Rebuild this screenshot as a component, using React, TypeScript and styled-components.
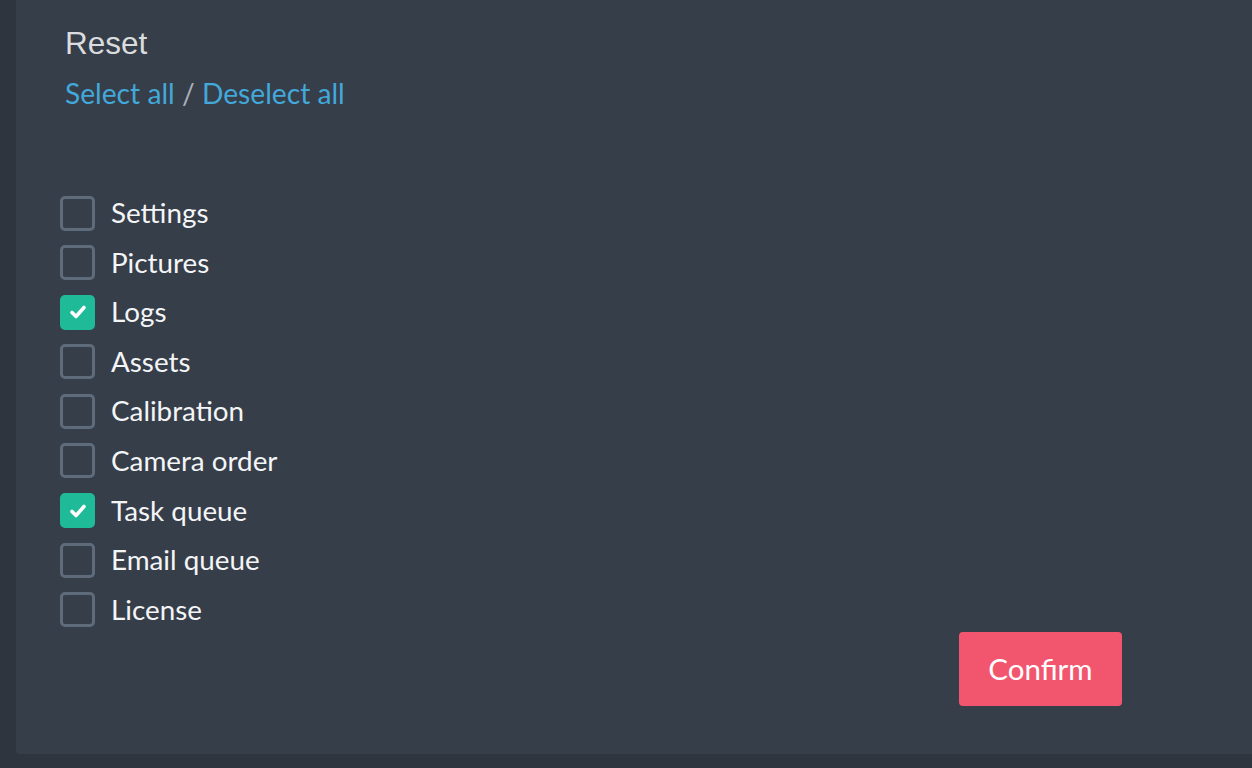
import React, { useState } from 'react'
import styled, { createGlobalStyle } from 'styled-components'

const GlobalStyle = createGlobalStyle`
  html, body {
    margin: 0;
    padding: 0;
    background: #2f353e;
    overflow: hidden;
  }
  #root {
    height: 768px;
  }
`

const Page = styled.div`
  height: 768px;
  padding-left: 16px;
  box-sizing: border-box;
`

const Panel = styled.div`
  height: 754px;
  background: #363e49;
  border-bottom-left-radius: 4px;
  box-sizing: border-box;
  padding: 25px 0 0 49px;
  display: flex;
  flex-direction: column;
`

const Title = styled.div`
  font-family: 'Liberation Sans', Arial, sans-serif;
  font-size: 31.5px;
  line-height: 36px;
  height: 36px;
  color: #dadcdf;
`

const LinkRow = styled.div`
  margin-top: 14px;
  font-family: Lato, 'Open Sans', sans-serif;
  font-size: 28.2px;
  line-height: 36px;
  height: 36px;
  color: #a9b0b8;
`

const TextLink = styled.a`
  color: #43a8da;
  cursor: pointer;
  text-decoration: none;
`

const List = styled.div`
  margin-top: 85px;
  margin-left: -5px;
  display: flex;
  flex-direction: column;
  gap: 15.6px;
`

const Row = styled.label`
  display: flex;
  align-items: center;
  gap: 16px;
  height: 34px;
  cursor: pointer;
  font-family: Lato, 'Open Sans', sans-serif;
  font-size: 27.8px;
  line-height: 34px;
  color: #f4f5f7;
`

const Box = styled.span<{ $checked: boolean }>`
  width: 35px;
  height: 35px;
  box-sizing: border-box;
  border-radius: 5px;
  border: ${({ $checked }) => ($checked ? 'none' : '3px solid #5e6b7b')};
  background: ${({ $checked }) => ($checked ? '#1fba98' : 'transparent')};
  display: flex;
  align-items: center;
  justify-content: center;
  flex-shrink: 0;
`

const Footer = styled.div`
  margin-top: 5px;
  display: flex;
  justify-content: flex-end;
  padding-right: 130px;
`

const ConfirmButton = styled.button`
  width: 163px;
  height: 74px;
  border: none;
  border-radius: 4px;
  background: #f2566e;
  color: #ffffff;
  font-family: Lato, 'Open Sans', sans-serif;
  font-size: 29.5px;
  cursor: pointer;
`

const Check = () => (
  <svg width="20" height="20" viewBox="0 0 20 20">
    <polyline
      points="4,10.5 8,14.5 16,5.5"
      fill="none"
      stroke="#ffffff"
      strokeWidth="3.6"
      strokeLinecap="round"
      strokeLinejoin="round"
    />
  </svg>
)

const items = [
  'Settings',
  'Pictures',
  'Logs',
  'Assets',
  'Calibration',
  'Camera order',
  'Task queue',
  'Email queue',
  'License',
]

const App = () => {
  const [checked, setChecked] = useState<Record<string, boolean>>({
    Logs: true,
    'Task queue': true,
  })

  const toggle = (name: string) =>
    setChecked((prev) => ({ ...prev, [name]: !prev[name] }))

  const setAll = (value: boolean) =>
    setChecked(Object.fromEntries(items.map((i) => [i, value])))

  return (
    <Page>
      <GlobalStyle />
      <Panel>
        <Title>Reset</Title>
        <LinkRow>
          <TextLink onClick={() => setAll(true)}>Select all</TextLink>
          {' / '}
          <TextLink onClick={() => setAll(false)}>Deselect all</TextLink>
        </LinkRow>
        <List>
          {items.map((name) => (
            <Row key={name} onClick={() => toggle(name)}>
              <Box $checked={!!checked[name]}>{checked[name] && <Check />}</Box>
              {name}
            </Row>
          ))}
        </List>
        <Footer>
          <ConfirmButton>Confirm</ConfirmButton>
        </Footer>
      </Panel>
    </Page>
  )
}

export default App
